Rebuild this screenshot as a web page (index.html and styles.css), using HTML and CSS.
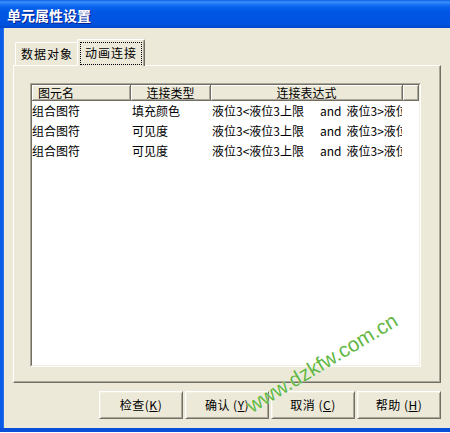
FILE: index.html
```html
<!DOCTYPE html>
<html>
<head>
<meta charset="utf-8">
<link rel="stylesheet" href="styles.css">
</head>
<body>
<div class="window">
  <div class="titlebar"><span class="title">单元属性设置</span></div>
  <div class="frame">
    <div class="tabs">
      <div class="tab">数据对象</div>
      <div class="tab active"><span class="focus">动画连接</span></div>
    </div>
    <div class="panel">
      <div class="list">
        <div class="list-inner">
          <div class="header">
            <div class="hcell c1 hleft">图元名</div>
            <div class="hcell c2">连接类型</div>
            <div class="hcell c3">连接表达式</div>
            <div class="hcell c4"></div>
          </div>
          <div class="row">
            <div class="cell c1">组合图符</div>
            <div class="cell c2">填充颜色</div>
            <div class="cell c3">液位3&lt;液位3上限<span class="and">and</span>液位3&gt;液位3下限</div>
          </div>
          <div class="row">
            <div class="cell c1">组合图符</div>
            <div class="cell c2">可见度</div>
            <div class="cell c3">液位3&lt;液位3上限<span class="and">and</span>液位3&gt;液位3下限</div>
          </div>
          <div class="row">
            <div class="cell c1">组合图符</div>
            <div class="cell c2">可见度</div>
            <div class="cell c3">液位3&lt;液位3上限<span class="and">and</span>液位3&gt;液位3下限</div>
          </div>
        </div>
      </div>
    </div>
    <div class="buttons">
      <button class="btn">检查(<u>K</u>)</button>
      <button class="btn">确认 (<u>Y</u>)</button>
      <button class="btn">取消 (<u>C</u>)</button>
      <button class="btn">帮助 (<u>H</u>)</button>
    </div>
  </div>
  <div class="watermark">www.dzkfw.com.cn</div>
</div>
</body>
</html>
```

FILE: styles.css
```css
* { box-sizing: border-box; }
html, body { margin: 0; padding: 0; }
body {
  width: 450px;
  height: 433px;
  background: #ffffff;
  overflow: hidden;
  font-family: "Noto Sans CJK SC", "Noto Sans", sans-serif;
  font-size: 12px;
  color: #000;
}
.window {
  position: relative;
  width: 450px;
  height: 432px;
  border-bottom: 4px solid #0a4fd8;
  background: #ece9d8;
}
.titlebar {
  height: 28px;
  background: linear-gradient(to bottom, #0a5ee8 0px, #3d92fa 2px, #1d78f5 4px, #0862ec 7px, #0056e4 12px, #0054e1 20px, #0051dc 25px, #0046cc 28px);
  display: flex;
  align-items: center;
  padding-left: 7px;
  padding-top: 1px;
}
.title {
  color: #fff;
  font-weight: bold;
  font-size: 14px;
  line-height: 16px;
  text-shadow: 1px 1px 0 #0a1e8c;
}
.frame {
  height: 400px;
  border-left: 3px solid #0b5ce8;
  box-shadow: inset 1px 0 0 #2a70ee;
  display: flex;
  flex-direction: column;
}
.tabs {
  margin-top: 11px;
  margin-left: 12px;
  height: 26px;
  display: flex;
  align-items: flex-end;
}
.tab {
  width: 63px;
  height: 23px;
  border-left: 1px solid #fff;
  border-top: 1px solid #fff;
  border-top-left-radius: 2px;
  display: flex;
  align-items: center;
  justify-content: center;
  line-height: 16px;
  padding-bottom: 1px;
  letter-spacing: 1px;
}
.tab.active {
  position: relative;
  z-index: 1;
  width: 68px;
  height: 27px;
  margin-left: -1px;
  margin-bottom: -1px;
  background: #ece9d8;
  border-right: 1px solid #716f64;
  border-top-right-radius: 2px;
  box-shadow: inset -1px 0 0 #aca899;
  padding: 2px 2px 1px 2px;
  align-items: stretch;
}
.focus {
  flex: 1;
  border: 1px dotted #000;
  display: flex;
  align-items: center;
  justify-content: center;
  padding-bottom: 2px;
}
.panel {
  margin-left: 10px;
  width: 428px;
  height: 318px;
  border-top: 1px solid #fff;
  border-left: 1px solid #fff;
  border-right: 1px solid #716f64;
  border-bottom: 1px solid #716f64;
  box-shadow: inset -1px -1px 0 #aca899;
  padding: 17px 0 0 16px;
}
.list {
  width: 391px;
  height: 284px;
  border-top: 1px solid #aca899;
  border-left: 1px solid #aca899;
  border-right: 1px solid #fff;
  border-bottom: 1px solid #fff;
}
.list-inner {
  width: 100%;
  height: 100%;
  background: #fff;
  border-top: 1px solid #716f64;
  border-left: 1px solid #716f64;
  border-right: 1px solid #f1efe2;
  border-bottom: 1px solid #f1efe2;
  overflow: hidden;
}
.header {
  display: flex;
  height: 16px;
}
.hcell {
  height: 16px;
  background: #ece9d8;
  border-right: 1px solid #716f64;
  border-bottom: 1px solid #716f64;
  box-shadow: inset 1px 1px 0 #fff, inset -1px -1px 0 #aca899;
  display: flex;
  align-items: center;
  justify-content: center;
  line-height: 14px;
  white-space: nowrap;
}
.hcell.hleft { justify-content: flex-start; padding-left: 6px; }
.c1 { width: 99px; flex: none; }
.c2 { width: 80px; flex: none; }
.c3 { width: 192px; flex: none; }
.c4 { flex: 1; }
.row {
  display: flex;
  height: 20px;
  white-space: nowrap;
}
.cell {
  height: 20px;
  line-height: 20px;
}
.cell.c2, .cell.c3 { padding-left: 1px; }
.cell.c3 { width: 191px; overflow: hidden; }
.and { margin: 0 5px 0 16px; }
.buttons {
  margin-top: 8px;
  margin-right: 9px;
  display: flex;
  justify-content: flex-end;
  gap: 2px;
}
.btn {
  width: 84px;
  height: 28px;
  margin: 0;
  padding: 0 0 1px 0;
  font-family: "Noto Sans CJK SC", "Noto Sans", sans-serif;
  font-size: 12px;
  line-height: 16px;
  letter-spacing: 0.5px;
  color: #000;
  background: #ece9d8;
  border-top: 1px solid #fff;
  border-left: 1px solid #fff;
  border-right: 1px solid #716f64;
  border-bottom: 1px solid #716f64;
  box-shadow: inset 1px 1px 0 #f1efe2, inset -1px -1px 0 #aca899;
  border-radius: 0;
}
.btn u { text-underline-offset: 1px; }
.watermark {
  position: absolute;
  left: 234px;
  top: 351px;
  width: 176px;
  line-height: 24px;
  text-align: center;
  font-family: "Liberation Sans", Arial, sans-serif;
  font-size: 20.5px;
  color: #62b744;
  text-shadow: 0 0 1px #fff;
  transform: rotate(-31deg);
  transform-origin: center center;
  white-space: nowrap;
}
```
